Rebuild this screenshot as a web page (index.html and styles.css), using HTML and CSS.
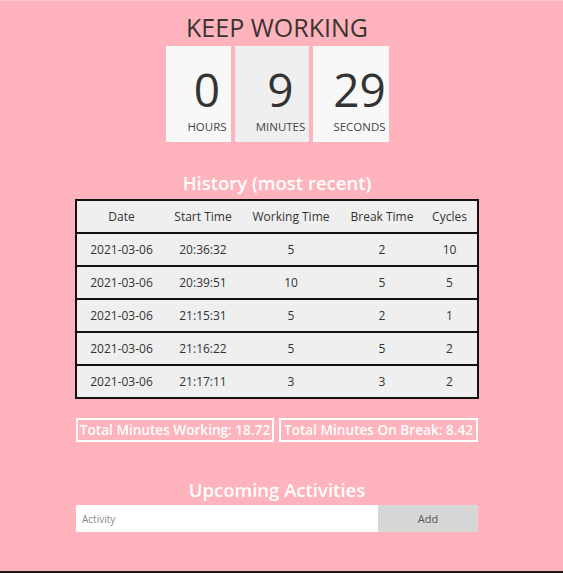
FILE: index.html
```html
<!DOCTYPE html>
<html>
<head>
<meta charset="utf-8">
<link rel="stylesheet" href="styles.css">
</head>
<body>
<div class="page">
  <h1 class="title">KEEP WORKING</h1>
  <div class="timer">
    <div class="unit unit-h"><div class="num">0</div><div class="lbl">HOURS</div></div>
    <div class="unit unit-m"><div class="num">9</div><div class="lbl">MINUTES</div></div>
    <div class="unit unit-s"><div class="num">29</div><div class="lbl">SECONDS</div></div>
  </div>

  <h2 class="section">History (most recent)</h2>
  <table class="history">
    <colgroup>
      <col class="c1"><col class="c2"><col class="c3"><col class="c4"><col class="c5">
    </colgroup>
    <tr><th>Date</th><th>Start Time</th><th>Working Time</th><th>Break Time</th><th>Cycles</th></tr>
    <tr><td>2021-03-06</td><td>20:36:32</td><td>5</td><td>2</td><td>10</td></tr>
    <tr><td>2021-03-06</td><td>20:39:51</td><td>10</td><td>5</td><td>5</td></tr>
    <tr><td>2021-03-06</td><td>21:15:31</td><td>5</td><td>2</td><td>1</td></tr>
    <tr><td>2021-03-06</td><td>21:16:22</td><td>5</td><td>5</td><td>2</td></tr>
    <tr><td>2021-03-06</td><td>21:17:11</td><td>3</td><td>3</td><td>2</td></tr>
  </table>

  <div class="totals">
    <div class="total t1">Total Minutes Working: 18.72</div>
    <div class="total t2">Total Minutes On Break: 8.42</div>
  </div>

  <h2 class="section upcoming">Upcoming Activities</h2>
  <div class="add-row">
    <input class="activity" type="text" placeholder="Activity">
    <button class="add">Add</button>
  </div>
</div>
</body>
</html>
```
FILE: styles.css
```css
html {
  background: #231717;
}
body {
  margin: 0;
  min-height: 570px;
  background: #ffb3bc;
  border-top: 1px solid #ffc4ca;
  font-family: "Open Sans", "Noto Sans", sans-serif;
  color: #333;
}
.page {
  display: flex;
  flex-direction: column;
  align-items: center;
  padding-right: 9px;
}
.title {
  margin: 11px 0 0 0;
  font-size: 25px;
  font-weight: 400;
  line-height: 30px;
  color: #3a3333;
}
.timer {
  display: flex;
  gap: 4px;
  margin-top: 4px;
}
.unit {
  height: 96px;
  background: #f8f8f8;
  display: flex;
  flex-direction: column;
  align-items: center;
  padding-left: 18px;
  box-sizing: border-box;
}
.unit-h { width: 65px; }
.unit-m { width: 74px; background: #efefef; }
.unit-s { width: 76px; }
.num {
  font-size: 46px;
  line-height: 50px;
  margin-top: 18px;
  color: #333;
}
.lbl {
  font-size: 11.5px;
  line-height: 14px;
  margin-top: 6px;
  color: #444;
}
.section {
  margin: 29px 0 0 0;
  font-size: 18.5px;
  font-weight: 600;
  line-height: 24px;
  color: #fff;
}
.history {
  margin-top: 4px;
  width: 402px;
  table-layout: fixed;
  border-collapse: collapse;
  border: 2px solid #111;
  background: #efefef;
  font-size: 12px;
  color: #333;
}
.c1 { width: 90px; }
.c2 { width: 74px; }
.c3 { width: 102px; }
.c4 { width: 80px; }
.c5 { width: 56px; }
.history tr {
  border: 2px solid #111;
  height: 33px;
}
.history th, .history td {
  font-weight: 400;
  text-align: center;
  padding: 0;
  white-space: nowrap;
}
.totals {
  display: flex;
  gap: 5px;
  margin-top: 19px;
}
.total {
  border: 2px solid #fff;
  color: #fff;
  font-size: 13.6px;
  font-weight: 600;
  line-height: 20px;
  padding: 0;
  box-sizing: border-box;
  text-align: center;
  white-space: nowrap;
}
.t1 { width: 198px; }
.t2 { width: 199px; }
.upcoming {
  margin-top: 36px;
}
.add-row {
  display: flex;
  margin-top: 3px;
  width: 402px;
}
.activity {
  width: 302px;
  height: 27px;
  border: none;
  padding: 0 6px;
  box-sizing: border-box;
  font-family: inherit;
  font-size: 10px;
  background: #fff;
  outline: none;
}
.activity::placeholder {
  color: #888;
}
.add {
  width: 100px;
  height: 27px;
  border: none;
  background: #d6d6d6;
  color: #555;
  font-family: inherit;
  font-size: 11px;
  padding: 0;
}
```
